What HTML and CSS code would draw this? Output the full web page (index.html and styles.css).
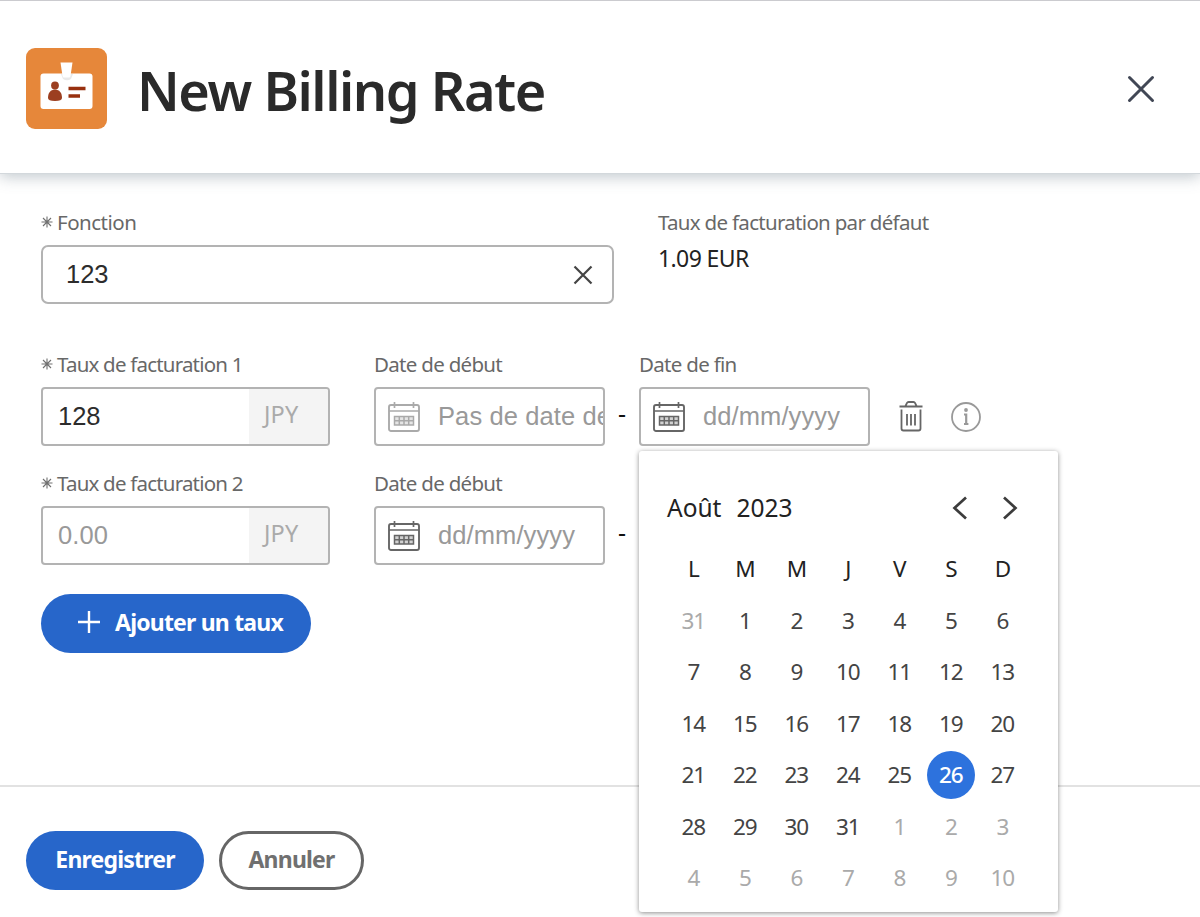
FILE: index.html
```html
<!DOCTYPE html>
<html lang="fr">
<head>
<meta charset="utf-8">
<title>New Billing Rate</title>
<link rel="stylesheet" href="styles.css">
</head>
<body>
<svg width="0" height="0" class="defs">
  <symbol id="cal" viewBox="0 0 32 30">
    <g fill="none" stroke="currentColor">
      <rect x="1" y="3" width="30" height="26" rx="2" stroke-width="1.9"/>
      <path d="M1 9h30M6.500 0v6M25.500 0v6" stroke-width="1.7"/>
      <path d="M6.500 14.500h19v8.500h-19zM6.500 18.700h19M11.300 14.500v8.500M16 14.500v8.500M20.700 14.500v8.500" stroke-width="1.500"/>
    </g>
    <path d="M6.500 14.500h19v8.500h-19z" fill="currentColor" opacity=".3"/>
  </symbol>
  <symbol id="star" viewBox="0 0 12 12">
    <path d="M6 .5v11M.5 6h11M2 2l8 8M10 2l-8 8" stroke="currentColor" stroke-width="1.100"/>
  </symbol>
</svg>
<div class="dialog">
  <header class="header">
    <svg class="logo" width="81" height="81" viewBox="0 0 81 81">
      <rect width="81" height="81" rx="9" fill="#e6873a"/>
      <rect x="14.500" y="25.500" width="52" height="35.500" rx="3" fill="#fff"/>
      <path d="M35 26h12l-2 5q-4 2.500-8 0z" fill="#e9e9e9"/>
      <path d="M34.500 14.500h12l-2 13.500q-.3 1.500-1.500 1.500h-5q-1.200 0-1.500-1.500z" fill="#fff"/>
      <circle cx="29" cy="37.500" r="3.900" fill="#9c3f20"/>
      <path d="M22 50c0-5 2.500-8.500 7-8.500s7 3.500 7 8.500q0 3-7 3t-7-3z" fill="#9c3f20"/>
      <path d="M42.500 40.500h17M42.500 48h11.500" stroke="#98300f" stroke-width="3.300"/>
    </svg>
    <h1 class="title">New Billing Rate</h1>
    <svg class="close" width="28" height="28" viewBox="0 0 28 28"><path d="M2.500 2.500l23 23M25.500 2.500l-23 23" stroke="#414755" stroke-width="3" stroke-linecap="round"/></svg>
  </header>

  <main class="main">
    <div class="row row-top">
      <div class="field job">
        <label class="label"><svg class="star"><use href="#star"/></svg><span>Fonction</span></label>
        <div class="input rounded">
          <span class="value">123</span>
          <svg class="clear" width="20" height="20" viewBox="0 0 20 20"><path d="M1.500 1.500l17 17M18.500 1.500l-17 17" stroke="#444" stroke-width="2.200"/></svg>
        </div>
      </div>
      <div class="default">
        <div class="label"><span>Taux de facturation par défaut</span></div>
        <div class="default-value">1.09 EUR</div>
      </div>
    </div>

    <div class="row">
      <div class="field rate">
        <label class="label"><svg class="star"><use href="#star"/></svg><span class="rate-name">Taux de facturation 1</span></label>
        <div class="input"><span class="value">128</span><span class="unit">JPY</span></div>
      </div>
      <div class="field date">
        <label class="label"><span>Date de début</span></label>
        <div class="input"><svg class="cal muted"><use href="#cal"/></svg><span class="placeholder">Pas de date de</span></div>
      </div>
      <span class="dash">-</span>
      <div class="field date">
        <label class="label"><span>Date de fin</span></label>
        <div class="input"><svg class="cal"><use href="#cal"/></svg><span class="placeholder">dd/mm/yyyy</span></div>
        <div class="picker">
          <div class="picker-head">
            <span class="month">Août</span><span class="year">2023</span>
            <svg class="prev" width="16" height="24" viewBox="0 0 16 24"><path d="M14 1.500L2.500 12 14 22.500" fill="none" stroke="#3c3c3c" stroke-width="2.700"/></svg>
            <svg class="next" width="16" height="24" viewBox="0 0 16 24"><path d="M2 1.500L13.500 12 2 22.500" fill="none" stroke="#3c3c3c" stroke-width="2.700"/></svg>
          </div>
          <div class="days">
            <b>L</b><b>M</b><b>M</b><b>J</b><b>V</b><b>S</b><b>D</b>
            <i>31</i><span>1</span><span>2</span><span>3</span><span>4</span><span>5</span><span>6</span>
            <span>7</span><span>8</span><span>9</span><span>10</span><span>11</span><span>12</span><span>13</span>
            <span>14</span><span>15</span><span>16</span><span>17</span><span>18</span><span>19</span><span>20</span>
            <span>21</span><span>22</span><span>23</span><span>24</span><span>25</span><span class="selected">26</span><span>27</span>
            <span>28</span><span>29</span><span>30</span><span>31</span><i>1</i><i>2</i><i>3</i>
            <i>4</i><i>5</i><i>6</i><i>7</i><i>8</i><i>9</i><i>10</i>
          </div>
        </div>
      </div>
      <div class="actions">
        <svg width="24" height="31" viewBox="0 0 24 31" fill="none" stroke="#666" stroke-width="1.800">
          <path d="M.5 5.500h23M6.500 5l1.500-3q.4-1 1.500-1h5q1.100 0 1.500 1l1.500 3M2.500 8.500v19q0 2 2 2h15q2 0 2-2v-19M8 13v11.500M12 13v11.500M16 13v11.500"/>
        </svg>
        <svg width="30" height="30" viewBox="0 0 30 30" fill="none" stroke="#999">
          <circle cx="15" cy="15" r="14" stroke-width="1.800"/><circle cx="15" cy="8" r="1.900" fill="#999" stroke="none"/><path d="M13 12.500h2.200v9.500M13 22h4.400" stroke-width="2.200"/>
        </svg>
      </div>
    </div>

    <div class="row row-last">
      <div class="field rate">
        <label class="label"><svg class="star"><use href="#star"/></svg><span class="rate-name">Taux de facturation 2</span></label>
        <div class="input"><span class="placeholder">0.00</span><span class="unit">JPY</span></div>
      </div>
      <div class="field date">
        <label class="label"><span>Date de début</span></label>
        <div class="input"><svg class="cal"><use href="#cal"/></svg><span class="placeholder">dd/mm/yyyy</span></div>
      </div>
      <span class="dash">-</span>
    </div>

    <button class="btn primary add"><svg width="22" height="22" viewBox="0 0 22 22"><path d="M11 0v22M0 11h22" stroke="#fff" stroke-width="2.400"/></svg><span>Ajouter un taux</span></button>
  </main>

  <footer class="footer">
    <button class="btn primary save"><span>Enregistrer</span></button>
    <button class="btn outline"><span>Annuler</span></button>
  </footer>
</div>
</body>
</html>
```
FILE: styles.css
```css
* { box-sizing: border-box; }
body { margin: 0; background: #fff; font-family: "Noto Sans", "Open Sans", sans-serif; color: #222; }
.defs { position: absolute; }
svg { flex: none; display: block; }
.dialog { width: 1200px; height: 917px; display: flex; flex-direction: column; overflow: hidden; }
.header { height: 174px; flex: none; display: flex; align-items: center; padding: 2px 45px 0 26px; border-top: 1px solid #cbcbcf; border-bottom: 1px solid #d3d8dc; box-shadow: 0 3px 14px rgba(80, 100, 115, .35); }
.title { margin: 3px 0 0 30px; font-size: 54px; line-height: 74px; font-weight: 600; letter-spacing: -1.450px; color: #2a2a2a; white-space: nowrap; }
.close { margin: 1px 0 0 auto; }
.main { flex: 1; padding: 35px 0 0 41px; }
.row { display: flex; height: 119px; }
.row-top { height: 142px; }
.row-last { height: 124px; }
.label { display: flex; align-items: center; height: 26px; margin-bottom: 10px; font-size: 20.500px; font-weight: 400; letter-spacing: -.7px; color: #686868; white-space: nowrap; }
.star { width: 12px; height: 12px; margin-right: 4px; color: #707070; }
.rate-name { letter-spacing: -.8px; }
.job .label { letter-spacing: -.5px; }
.input { display: flex; align-items: center; height: 59px; border: 2px solid #b3b3b3; border-radius: 4px; overflow: hidden; font-family: "Liberation Sans", Arial, sans-serif; font-size: 25.500px; white-space: nowrap; }
.rounded { border-radius: 7px; }
.job { width: 573px; }
.job .value { padding-left: 23px; }
.clear { margin: 0 19px 0 auto; }
.default { margin-left: 44px; }
.default .label { margin-bottom: 5px; }
.default-value { font-size: 23px; line-height: 36px; letter-spacing: -.6px; }
.rate { width: 289px; margin-right: 44px; }
.rate .value, .rate .placeholder { flex: 1; padding-left: 15px; }
.value { color: #2c2c2c; }
.placeholder { flex: 1; min-width: 0; overflow: hidden; color: #999; letter-spacing: .1px; }
.unit { width: 79px; align-self: stretch; padding: 7px 0 0 15px; background: #f4f4f4; color: #aaa; font-family: "Noto Sans", sans-serif; font-size: 23.500px; letter-spacing: .2px; line-height: 36px; }
.date { width: 231px; position: relative; }
.date + .dash + .date { width: 231px; }
.cal { width: 32px; height: 30px; margin: 0 18px 0 12px; color: #666; }
.cal.muted { color: #aaa; }
.dash { width: 34px; padding-top: 44px; text-align: center; font-size: 25px; line-height: 36px; color: #111; }
.actions { display: flex; align-items: center; gap: 28px; height: 59px; margin: 36px 0 0 29px; }
.picker { position: absolute; left: 0; top: 100px; width: 419px; height: 461px; padding: 35px 30px 0 28px; background: #fff; border-radius: 3px; box-shadow: 0 1px 5px rgba(0, 0, 0, .45); }
.picker-head { display: flex; align-items: center; height: 42px; font-size: 24.500px; color: #222; }
.year { margin-left: 15px; }
.prev { margin: 2px 0 0 auto; }
.next { margin: 2px 10px 0 34px; }
.days { display: grid; grid-template-columns: repeat(7, 51.500px); grid-auto-rows: 51.500px; margin: 15px 0 0 .5px; font-size: 22.500px; letter-spacing: -1.200px; place-items: center; color: #444; }
.days b, .days i { font-weight: 400; font-style: normal; }
.days b { color: #222; }
.days i { color: #aaa; }
.selected { display: flex; align-items: center; justify-content: center; width: 48px; height: 48px; border-radius: 50%; background: #2d72dd; color: #fff; font-weight: 500; }
.btn { display: flex; align-items: center; justify-content: center; height: 59px; padding: 0; border: 0; border-radius: 30px; font-family: "Noto Sans", sans-serif; font-size: 23px; font-weight: 700; letter-spacing: -.8px; white-space: nowrap; }
.btn span { margin-top: -3px; }
.btn svg { margin-top: -4px; }
.primary { background: #2766ca; color: #fff; }
.add { width: 270px; gap: 15px; padding-left: 9px; }
.save { width: 178px; }
.outline { width: 145px; border: 3px solid #666; background: #fff; color: #707070; }
.footer { height: 132px; flex: none; display: flex; gap: 15px; border-top: 2px solid #e2e2e2; padding: 44px 0 0 26px; }
```
